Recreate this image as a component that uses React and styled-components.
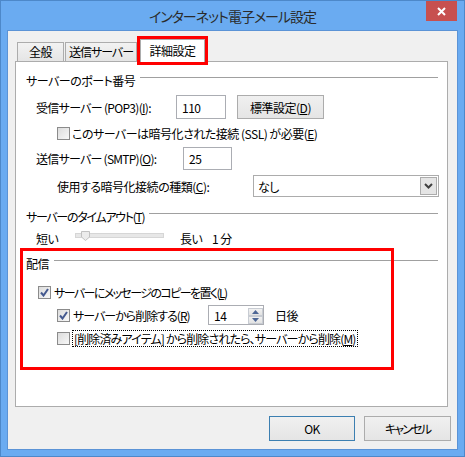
import styled, { createGlobalStyle } from "styled-components";

const GlobalStyle = createGlobalStyle`
  html, body {
    margin: 0;
    padding: 0;
    background: #ffffff;
  }
  body {
    font-family: "Noto Sans CJK JP", "Noto Sans", sans-serif;
    font-size: 12px;
    letter-spacing: -0.5px;
    color: #000;
    font-feature-settings: "palt";
  }
`;

const Window = styled.div`
  width: 465px;
  height: 457px;
  box-sizing: border-box;
  border: 1px solid #4d88c9;
  background: #6aabf1;
  padding: 0 6px 6px;
  display: flex;
  flex-direction: column;
`;

const TitleBar = styled.div`
  height: 29px;
  display: grid;
  grid-template-columns: 1fr auto 1fr;
  align-items: center;
`;

const Title = styled.div`
  grid-column: 2;
  font-size: 14px;
  letter-spacing: -1px;
  color: #2b2b2b;
  line-height: 16px;
`;

const CloseButton = styled.div`
  grid-column: 3;
  justify-self: end;
  align-self: start;
  width: 31px;
  height: 20px;
  margin-right: 1px;
  background: #c7504f;
  display: flex;
  align-items: center;
  justify-content: center;
`;

const Client = styled.div`
  flex: 1;
  border: 1px solid #5b93d6;
  background: #f0f0f0;
  display: flex;
  flex-direction: column;
  padding-top: 8px;
`;

const TabStrip = styled.div`
  display: flex;
  align-items: flex-end;
  padding-left: 9px;
`;

const Tab = styled.div`
  box-sizing: border-box;
  width: ${(p) => p.$w}px;
  height: ${(p) => (p.$active ? 23 : 19)}px;
  margin-bottom: ${(p) => (p.$active ? -1 : 0)}px;
  margin-left: ${(p) => p.$ml || 0}px;
  margin-right: ${(p) => p.$mr || 0}px;
  border: 1px solid #acacac;
  border-bottom: none;
  background: ${(p) =>
    p.$active ? "#ffffff" : "linear-gradient(#f2f2f2, #e5e5e5)"};
  position: relative;
  z-index: ${(p) => (p.$active ? 1 : 0)};
  outline: ${(p) => (p.$marked ? "3px solid #ff0000" : "none")};
  display: flex;
  align-items: center;
  justify-content: center;
  white-space: nowrap;
  letter-spacing: ${(p) => p.$ls ?? -0.5}px;
  line-height: 14px;
`;

const Panel = styled.div`
  box-sizing: border-box;
  margin-left: 7px;
  width: 433px;
  height: 346px;
  border: 1px solid #acacac;
  background: #ffffff;
  padding: 10px 9px 0 10px;
`;

const Group = styled.div`
  position: relative;
  margin-top: ${(p) => p.$mt || 0}px;
`;

const GroupHeader = styled.div`
  display: flex;
  align-items: center;
  height: 16px;
`;

const Rule = styled.div`
  flex: 1;
  height: 1px;
  background: #a0a0a0;
  margin: 0 0 6px 5px;
`;

const Row = styled.div`
  display: flex;
  align-items: center;
  height: ${(p) => p.$h}px;
  margin-top: ${(p) => p.$mt}px;
  padding-left: ${(p) => p.$indent}px;
`;

const Text = styled.span`
  width: ${(p) => (p.$w ? `${p.$w}px` : "auto")};
  margin-left: ${(p) => p.$ml || 0}px;
  letter-spacing: ${(p) => p.$ls ?? -0.5}px;
  flex: none;
  white-space: nowrap;
`;

const TextBox = styled.div`
  box-sizing: border-box;
  width: ${(p) => p.$w}px;
  height: ${(p) => p.$h}px;
  border: 1px solid #abadb3;
  background: #fff;
  display: flex;
  align-items: center;
  padding-left: 5px;
  position: relative;
  flex: none;
`;

const PushButton = styled.div`
  box-sizing: border-box;
  width: ${(p) => p.$w}px;
  height: ${(p) => p.$h}px;
  margin-left: ${(p) => p.$ml || 0}px;
  border: 1px solid ${(p) => (p.$default ? "#3c7fb1" : "#acacac")};
  background: linear-gradient(#f0f0f0, #e5e5e5);
  display: flex;
  align-items: center;
  justify-content: center;
  letter-spacing: ${(p) => p.$ls ?? -0.5}px;
  flex: none;
`;

const Select = styled.div`
  box-sizing: border-box;
  width: 186px;
  height: 22px;
  border: 1px solid #acacac;
  background: #fff;
  display: flex;
  align-items: center;
  justify-content: space-between;
  padding: 0 1px 0 4px;
  flex: none;
`;

const DropButton = styled.div`
  box-sizing: border-box;
  width: 17px;
  height: 18px;
  border: 1px solid #acacac;
  background: #e5e5e5;
  display: flex;
  align-items: center;
  justify-content: center;
`;

const Track = styled.div`
  position: relative;
  box-sizing: border-box;
  width: 89px;
  height: 5px;
  margin: 0 16px 5px 0;
  background: #e7e7e7;
  border: 1px solid #d6d6d6;
  flex: none;
`;

const Thumb = styled.svg`
  position: absolute;
  left: 5px;
  top: -3px;
`;

const Check = styled.label`
  display: flex;
  align-items: center;
  gap: ${(p) => p.$gap || 3}px;
  width: ${(p) => (p.$w ? `${p.$w}px` : "auto")};
  flex: none;
  white-space: nowrap;
`;

const Box = styled.span`
  box-sizing: border-box;
  width: 13px;
  height: 13px;
  border: 1px solid #8b8b8b;
  background: linear-gradient(135deg, #dcdcdc, #f8f8f8);
  display: flex;
  align-items: center;
  justify-content: center;
  flex: none;
`;

const Focus = styled.span`
  border: 1px dotted #000;
  padding: 0 1px;
  line-height: 15px;
  letter-spacing: ${(p) => p.$ls ?? -0.5}px;
`;

const Spin = styled.div`
  position: absolute;
  right: 0;
  top: 2px;
  display: flex;
  flex-direction: column;
`;

const SpinHalf = styled.div`
  box-sizing: border-box;
  width: 15px;
  height: 8px;
  border: 1px solid #c8ccd3;
  background: linear-gradient(#f1f1f1, #e2e2e2);
  display: flex;
  align-items: center;
  justify-content: center;
`;

const Annotation = styled.div`
  position: absolute;
  left: -6px;
  top: -7px;
  width: 374px;
  height: 122px;
  box-sizing: border-box;
  border: 3px solid #ff0000;
  pointer-events: none;
`;

const ButtonRow = styled.div`
  display: flex;
  justify-content: flex-end;
  gap: 9px;
  margin-top: 9px;
  padding-right: 6px;
`;

const CheckMark = () => (
  <svg width="9" height="9" viewBox="0 0 9 9">
    <path d="M1 4.5 L3.5 7.5 L8 1" fill="none" stroke="#44598f" strokeWidth="2" />
  </svg>
);

const CheckBox = ({ checked }) => <Box>{checked && <CheckMark />}</Box>;

const Arrow = ({ up }) => (
  <svg width="7" height="4" viewBox="0 0 7 4">
    <path d={up ? "M0 4 L3.5 0 L7 4 Z" : "M0 0 L3.5 4 L7 0 Z"} fill="#4d6695" />
  </svg>
);

export default function App() {
  return (
    <>
      <GlobalStyle />
      <Window>
        <TitleBar>
          <Title>インターネット電子メール設定</Title>
          <CloseButton>
            <svg width="9" height="9" viewBox="0 0 9 9">
              <path d="M1 1 L8 8 M8 1 L1 8" stroke="#fff" strokeWidth="2" />
            </svg>
          </CloseButton>
        </TitleBar>
        <Client>
          <TabStrip>
            <Tab $w={47} $mr={1}>全般</Tab>
            <Tab $w={72} $ls={-1}>送信サーバー</Tab>
            <Tab $w={65} $ml={3} $active $marked>
              詳細設定
            </Tab>
          </TabStrip>
          <Panel>
            <Group>
              <GroupHeader>
                <Text>サーバーのポート番号</Text>
                <Rule />
              </GroupHeader>
              <Row $h={24} $mt={7} $indent={10}>
                <Text $w={140} $ls={-0.7}>
                  受信サーバー (POP3)(<u>I</u>):
                </Text>
                <TextBox $w={50} $h={24}>110</TextBox>
                <PushButton $w={87} $h={24} $ml={11}>
                  標準設定(<u>D</u>)
                </PushButton>
              </Row>
              <Row $h={16} $mt={6} $indent={31}>
                <Check $gap={2}>
                  <CheckBox />
                  <Text $ls={-0.5}>
                    このサーバーは暗号化された接続 (SSL) が必要(<u>E</u>)
                  </Text>
                </Check>
              </Row>
              <Row $h={23} $mt={6} $indent={10}>
                <Text $w={147} $ls={-0.75}>
                  送信サーバー (SMTP)(<u>O</u>):
                </Text>
                <TextBox $w={49} $h={23}>25</TextBox>
              </Row>
              <Row $h={22} $mt={5} $indent={31}>
                <Text $w={196} $ls={-0.5}>
                  使用する暗号化接続の種類(<u>C</u>):
                </Text>
                <Select>
                  <span>なし</span>
                  <DropButton>
                    <svg width="9" height="6" viewBox="0 0 9 6">
                      <path d="M1 1 L4.5 4.5 L8 1" fill="none" stroke="#404040" strokeWidth="2" />
                    </svg>
                  </DropButton>
                </Select>
              </Row>
            </Group>

            <Group $mt={11}>
              <GroupHeader>
                <Text $ls={-1.3}>
                  サーバーのタイムアウト(<u>T</u>)
                </Text>
                <Rule />
              </GroupHeader>
              <Row $h={16} $mt={6} $indent={10}>
                <Text $w={39}>短い</Text>
                <Track>
                  <Thumb width="9" height="10" viewBox="0 0 9 10">
                    <path d="M0.5 0.5 H8.5 V6 L4.5 9.5 L0.5 6 Z" fill="#ececec" stroke="#c2c2c2" />
                  </Thumb>
                </Track>
                <Text $w={32}>長い</Text>
                <Text>1 分</Text>
              </Row>
            </Group>

            <Group $mt={9}>
              <GroupHeader>
                <Text>配信</Text>
                <Rule />
              </GroupHeader>
              <Row $h={16} $mt={13} $indent={12}>
                <Check>
                  <CheckBox checked />
                  <Text $ls={-1.6}>
                    サーバーにメッセージのコピーを置く(<u>L</u>)
                  </Text>
                </Check>
              </Row>
              <Row $h={20} $mt={5} $indent={31}>
                <Check $w={151}>
                  <CheckBox checked />
                  <Text $ls={-1}>
                    サーバーから削除する(<u>R</u>)
                  </Text>
                </Check>
                <TextBox $w={56} $h={20}>
                  14
                  <Spin>
                    <SpinHalf>
                      <Arrow up />
                    </SpinHalf>
                    <SpinHalf>
                      <Arrow />
                    </SpinHalf>
                  </Spin>
                </TextBox>
                <Text $ml={11}>日後</Text>
              </Row>
              <Row $h={17} $mt={5} $indent={31}>
                <Check $gap={2}>
                  <CheckBox />
                  <Focus $ls={-0.85}>
                    [削除済みアイテム] から削除されたら、サーバーから削除(<u>M</u>)
                  </Focus>
                </Check>
              </Row>
              <Annotation />
            </Group>
          </Panel>
          <ButtonRow>
            <PushButton $w={86} $h={25} $default>
              OK
            </PushButton>
            <PushButton $w={87} $h={25} $ls={-1.8}>
              キャンセル
            </PushButton>
          </ButtonRow>
        </Client>
      </Window>
    </>
  );
}
